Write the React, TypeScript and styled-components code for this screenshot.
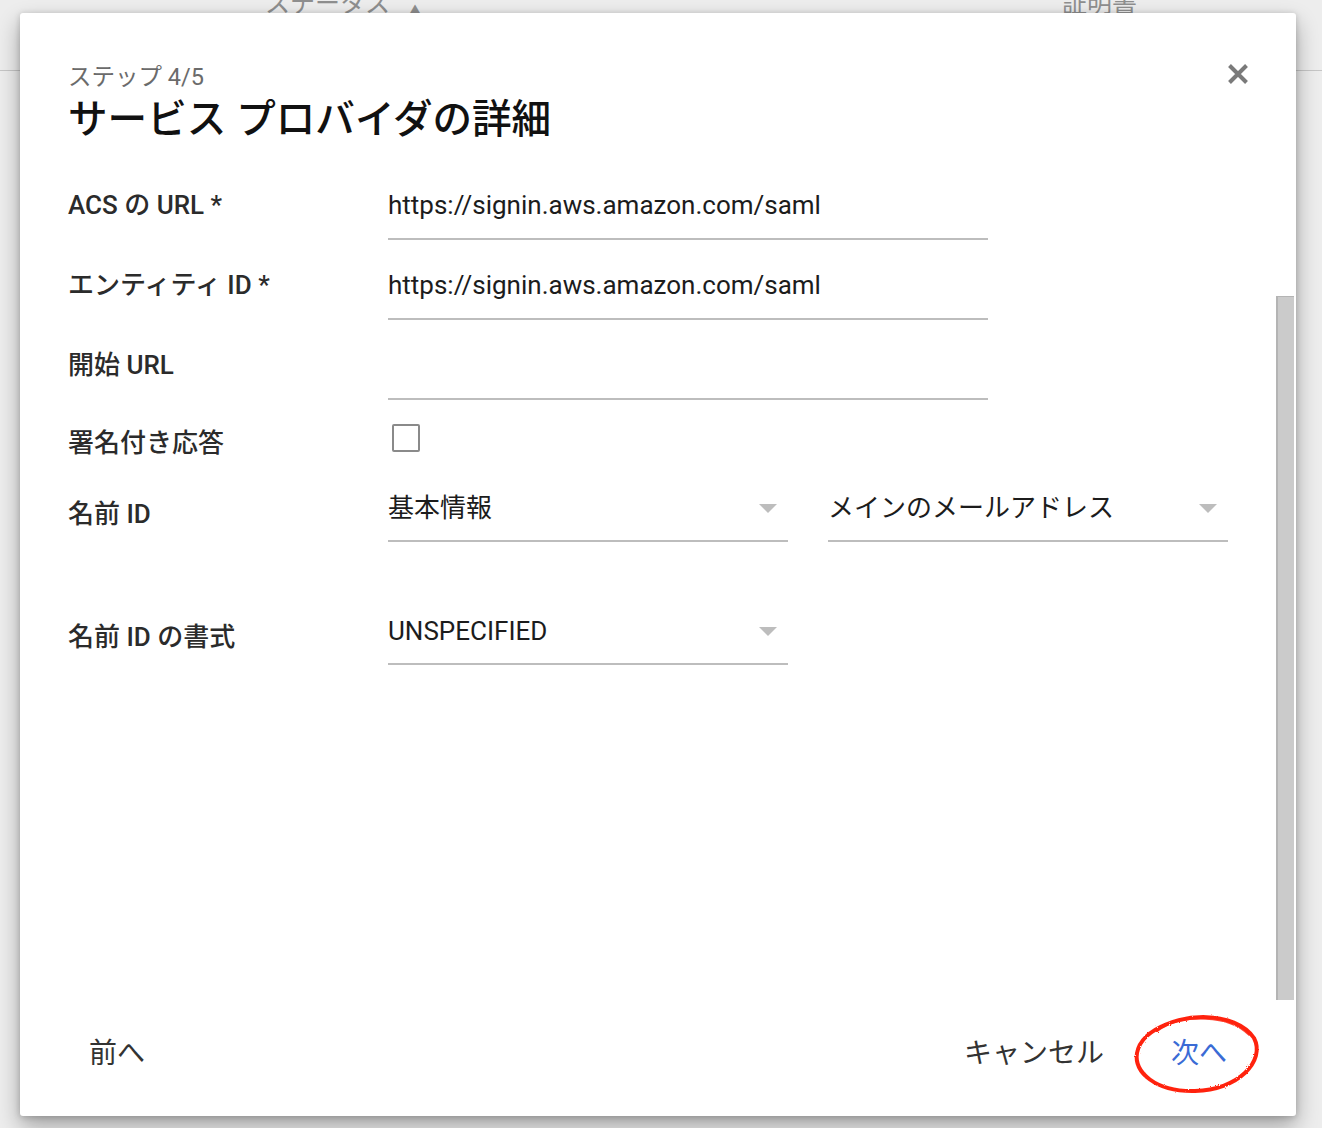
import React from "react";
import styled, { createGlobalStyle } from "styled-components";

const GlobalStyle = createGlobalStyle`
  html, body {
    margin: 0;
    padding: 0;
    width: 1322px;
    height: 1128px;
    overflow: hidden;
    font-family: Roboto, "Noto Sans CJK JP", sans-serif;
    background: #ffffff;
  }
`;

const Page = styled.div`
  position: relative;
  width: 1322px;
  height: 1128px;
  overflow: hidden;
  background: #ffffff;
`;

const TableHead = styled.div`
  display: flex;
  height: 70px;
  border-bottom: 1px solid #d6d6d6;
  color: #9a9a9a;
  font-size: 25px;
  line-height: 25px;
`;

const HeadCell = styled.div<{ $left: number }>`
  display: flex;
  gap: 18px;
  margin-left: ${(p) => p.$left}px;
  margin-top: -9px;
`;

const SortMark = styled.span`
  font-size: 14px;
  padding-top: 8px;
`;

const Dim = styled.div`
  position: absolute;
  inset: 0;
  background: rgba(0, 0, 0, 0.07);
`;

const Dialog = styled.div`
  position: absolute;
  left: 20px;
  top: 13px;
  width: 1276px;
  height: 1103px;
  display: flex;
  flex-direction: column;
  background: #fff;
  border-radius: 3px;
  box-shadow: 0 10px 22px rgba(0, 0, 0, 0.32), 0 1px 6px rgba(0, 0, 0, 0.18);
  box-sizing: border-box;
`;

const Header = styled.div`
  display: flex;
  justify-content: space-between;
  align-items: flex-start;
  height: 147px;
  padding: 41px 38px 0 48px;
  box-sizing: border-box;
`;

const Titles = styled.div`
  display: flex;
  flex-direction: column;
  padding-top: 9px;
`;

const Step = styled.div`
  font-size: 23.5px;
  line-height: 28px;
  color: #6b6b6b;
`;

const Title = styled.h1`
  margin: 5px 0 0;
  font-size: 39.6px;
  line-height: 48px;
  font-weight: 500;
  color: #111;
`;

const CloseButton = styled.button`
  width: 40px;
  height: 40px;
  display: flex;
  align-items: center;
  justify-content: center;
  padding: 0;
  border: none;
  background: none;
  cursor: pointer;
`;

const Main = styled.div`
  flex: 1;
  display: flex;
`;

const Form = styled.div`
  flex: 1;
  padding: 5px 0 0 48px;
`;

const Row = styled.div<{ $height: number }>`
  display: flex;
  height: ${(p) => p.$height}px;
`;

const Label = styled.div<{ $top: number }>`
  width: 320px;
  flex: none;
  padding-top: ${(p) => p.$top}px;
  font-size: 26px;
  line-height: 30px;
  font-weight: 500;
  color: #2b2b2b;
`;

const TextField = styled.div`
  width: 600px;
  height: 48px;
  padding-top: 25px;
  border-bottom: 2px solid #bdbdbd;
  font-size: 26px;
  line-height: 30px;
  color: #1c1c1c;
`;

const Checkbox = styled.div`
  width: 24px;
  height: 24px;
  margin: 19px 0 0 4px;
  border: 2px solid #8a8a8a;
  border-radius: 2px;
`;

const Selects = styled.div`
  display: flex;
  gap: 40px;
`;

const Select = styled.div`
  width: 400px;
  height: 47px;
  padding-top: 23px;
  display: flex;
  justify-content: space-between;
  border-bottom: 2px solid #bdbdbd;
  font-size: 26px;
  line-height: 30px;
  color: #1c1c1c;
`;

const Arrow = styled.span`
  width: 0;
  height: 0;
  margin: 11px 11px 0 0;
  border-left: 9px solid transparent;
  border-right: 9px solid transparent;
  border-top: 9px solid #bdbdbd;
`;

const ScrollTrack = styled.div`
  width: 20px;
  display: flex;
  flex-direction: column;
  padding-top: 136px;
  box-sizing: border-box;
`;

const Thumb = styled.div`
  flex: 1;
  width: 16px;
  background: #cbcbcb;
  border-left: 2px solid #b4b4b4;
  border-top: 1px solid #b4b4b4;
`;

const Footer = styled.div`
  height: 116px;
  flex: none;
  display: flex;
  justify-content: space-between;
  align-items: flex-start;
  padding: 23px 48px 0;
  box-sizing: border-box;
`;

const FooterGroup = styled.div`
  display: flex;
  gap: 25px;
`;

const FlatButton = styled.button<{ $primary?: boolean }>`
  position: relative;
  height: 56px;
  padding: 0 21px;
  border: none;
  background: none;
  font-family: inherit;
  font-size: 28px;
  color: ${(p) => (p.$primary ? "#3a6bd5" : "#333")};
  cursor: pointer;
`;

const Circle = styled.svg`
  position: absolute;
  left: -17px;
  top: -12px;
  pointer-events: none;
`;

const TextRow = ({ label, value }: { label: string; value?: string }) => (
  <Row $height={80}>
    <Label $top={25}>{label}</Label>
    <TextField>{value}</TextField>
  </Row>
);

const App = () => (
  <Page>
    <GlobalStyle />
    <TableHead>
      <HeadCell $left={265}>
        ステータス<SortMark>▲</SortMark>
      </HeadCell>
      <HeadCell $left={640}>証明書</HeadCell>
    </TableHead>
    <Dim />
    <Dialog>
      <Header>
        <Titles>
          <Step>ステップ 4/5</Step>
          <Title>サービス プロバイダの詳細</Title>
        </Titles>
        <CloseButton aria-label="閉じる">
          <svg width="22" height="22" viewBox="0 0 22 22">
            <path d="M2.5 2.5 L19.5 19.5 M19.5 2.5 L2.5 19.5" stroke="#7a7a7a" strokeWidth="4" />
          </svg>
        </CloseButton>
      </Header>
      <Main>
        <Form>
          <TextRow label="ACS の URL *" value="https://signin.aws.amazon.com/saml" />
          <TextRow label="エンティティ ID *" value="https://signin.aws.amazon.com/saml" />
          <TextRow label="開始 URL" />
          <Row $height={65}>
            <Label $top={23}>署名付き応答</Label>
            <Checkbox />
          </Row>
          <Row $height={123}>
            <Label $top={29}>名前 ID</Label>
            <Selects>
              <Select>
                基本情報
                <Arrow />
              </Select>
              <Select>
                メインのメールアドレス
                <Arrow />
              </Select>
            </Selects>
          </Row>
          <Row $height={80}>
            <Label $top={29}>名前 ID の書式</Label>
            <Select>
              UNSPECIFIED
              <Arrow />
            </Select>
          </Row>
        </Form>
        <ScrollTrack>
          <Thumb />
        </ScrollTrack>
      </Main>
      <Footer>
        <FlatButton>前へ</FlatButton>
        <FooterGroup>
          <FlatButton>キャンセル</FlatButton>
          <FlatButton $primary>
            次へ
            <Circle width="132" height="90" viewBox="0 0 132 90">
              <defs>
                <filter id="crayon" x="-10%" y="-10%" width="120%" height="120%">
                  <feTurbulence type="fractalNoise" baseFrequency="0.9" numOctaves="2" seed="3" />
                  <feDisplacementMap in="SourceGraphic" scale="2.2" />
                </filter>
              </defs>
              <g filter="url(#crayon)" fill="none" stroke="#ff2410" strokeLinecap="round">
                <path
                  d="M24 19 C 46 2, 102 -1, 121 27 C 133 50, 105 79, 62 80 C 22 81, 1 61, 4 42 C 6 31, 14 21, 34 13"
                  strokeWidth="4"
                />
                <path d="M28 17 C 50 4, 96 3, 116 24" strokeWidth="1.8" opacity="0.85" />
              </g>
            </Circle>
          </FlatButton>
        </FooterGroup>
      </Footer>
    </Dialog>
  </Page>
);

export default App;
